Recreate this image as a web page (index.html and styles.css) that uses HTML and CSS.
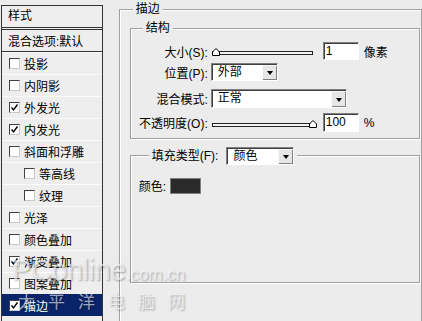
FILE: index.html
```html
<!DOCTYPE html>
<html lang="zh-CN">
<head>
  <meta charset="UTF-8" />
  <meta name="viewport" content="width=device-width, initial-scale=1.0"/>
  <title>图层样式 - 描边</title>
  <link rel="stylesheet" href="styles.css">
</head>
<body>
  <div class="dialog">
    <div class="styles-panel">
      <div class="panel-head">样式</div>
      <div class="panel-row blend">混合选项:默认</div>
      <div class="panel-row"><span class="check"></span>投影</div>
      <div class="panel-row"><span class="check"></span>内阴影</div>
      <div class="panel-row"><span class="check on"><svg viewBox="0 0 9 9"><path d="M1.5 4.5 L3.5 6.8 L7.5 1.5"/></svg></span>外发光</div>
      <div class="panel-row"><span class="check on"><svg viewBox="0 0 9 9"><path d="M1.5 4.5 L3.5 6.8 L7.5 1.5"/></svg></span>内发光</div>
      <div class="panel-row"><span class="check"></span>斜面和浮雕</div>
      <div class="panel-row sub"><span class="check"></span>等高线</div>
      <div class="panel-row sub"><span class="check"></span>纹理</div>
      <div class="panel-row"><span class="check"></span>光泽</div>
      <div class="panel-row"><span class="check"></span>颜色叠加</div>
      <div class="panel-row"><span class="check on"><svg viewBox="0 0 9 9"><path d="M1.5 4.5 L3.5 6.8 L7.5 1.5"/></svg></span>渐变叠加</div>
      <div class="panel-row"><span class="check"></span>图案叠加</div>
      <div class="panel-row selected"><span class="check on"><svg viewBox="0 0 9 9"><path d="M1.5 4.5 L3.5 6.8 L7.5 1.5"/></svg></span>描边</div>
    </div>

    <div class="group outer">
      <div class="group-title">描边</div>

      <div class="group structure">
        <div class="group-title">结构</div>
        <div class="row">
          <span class="label">大小(S):</span>
          <div class="slider"><div class="track"></div><svg class="thumb" viewBox="0 0 8 8"><polygon points="0.5,7.5 0.5,4 4,0.5 7.5,4 7.5,7.5"/></svg></div>
          <div class="field">1</div>
          <span class="unit">像素</span>
        </div>
        <div class="row row-pos">
          <span class="label">位置(P):</span>
          <div class="dropdown pos">外部<span class="arrow"></span></div>
        </div>
        <div class="row row-mode">
          <span class="label">混合模式:</span>
          <div class="dropdown mode">正常<span class="arrow"></span></div>
        </div>
        <div class="row row-opacity">
          <span class="label">不透明度(O):</span>
          <div class="slider"><div class="track"></div><svg class="thumb end" viewBox="0 0 8 8"><polygon points="0.5,7.5 0.5,4 4,0.5 7.5,4 7.5,7.5"/></svg></div>
          <div class="field tall">100</div>
          <span class="unit">%</span>
        </div>
      </div>

      <div class="group fill">
        <div class="group-title fill-title">
          <span>填充类型(F):</span>
          <div class="dropdown kind">颜色<span class="arrow"></span></div>
        </div>
        <div class="color-row">
          <span>颜色:</span>
          <span class="swatch"></span>
        </div>
      </div>
    </div>
  </div>

  <div class="watermark">
    <div class="wm-logo">PConline<span>.com.cn</span></div>
    <div class="wm-cn">太平洋电脑网</div>
  </div>
</body>
</html>
```

FILE: styles.css
```css
body {
  margin: 0;
  width: 422px;
  height: 321px;
  overflow: hidden;
  position: relative;
  background: #ececec;
  font-family: "Liberation Sans", "Noto Sans CJK SC", sans-serif;
  font-size: 12px;
  color: #000;
}
.dialog {
  display: flex;
  align-items: flex-start;
}

/* left list */
.styles-panel {
  width: 100px;
  height: 320px;
  margin: 5px 0 0 1px;
  border: 1px solid #333;
  border-bottom: none;
  background: #eeeeee;
}
.panel-head {
  height: 21px;
  line-height: 21px;
  padding-left: 6px;
  border-bottom: 3px double #333;
}
.panel-row {
  display: flex;
  align-items: center;
  height: 21px;
  padding-left: 7px;
  border-top: 1px solid #fbfbfb;
}
.panel-row.blend {
  border-top: none;
  padding-left: 6px;
  border-bottom: 1px solid #333;
}
.panel-row.sub {
  padding-left: 22px;
}
.panel-row.selected {
  background: #0a246a;
  color: #fff;
  border-top-color: #0a246a;
}
.check {
  width: 9px;
  height: 9px;
  margin-right: 4px;
  background: #fff;
  border: 1px solid;
  border-color: #404040 #c8c8c8 #c8c8c8 #404040;
  display: flex;
}
.check svg {
  width: 9px;
  height: 9px;
}
.check path {
  fill: none;
  stroke: #000;
  stroke-width: 1.4;
}

/* group boxes */
.group {
  position: relative;
  border: 1px solid #a0a0a0;
  box-shadow: inset 1px 1px 0 #fff, 1px 1px 0 #fff;
}
.group-title {
  position: absolute;
  top: -8px;
  left: 12px;
  padding: 0 3px;
  line-height: 15px;
  background: #ececec;
}
.outer {
  width: 291px;
  height: 293px;
  margin: 9px 0 0 16px;
  padding: 18px 1px 0 10px;
}
.outer > .group-title {
  left: 13px;
}
.structure {
  height: 96px;
  padding-top: 13px;
}
.row {
  display: flex;
  align-items: center;
  height: 18px;
}
.row-pos { margin-top: 3px; }
.row-mode { margin-top: 8px; height: 19px; }
.row-opacity { margin-top: 5px; height: 19px; }
.label {
  width: 77px;
  margin-right: 3px;
  text-align: right;
}
.slider {
  position: relative;
  width: 105px;
  height: 10px;
  margin-left: 1px;
  margin-right: 6px;
}
.track {
  position: absolute;
  left: 0;
  right: 4px;
  bottom: 1px;
  height: 2px;
  background: #f4f4f4;
  border: 1px solid #222;
}
.thumb {
  position: absolute;
  left: 0;
  bottom: 0;
  width: 8px;
  height: 8px;
}
.thumb.end {
  left: auto;
  right: 0;
}
.thumb polygon {
  fill: #fff;
  stroke: #000;
  stroke-width: 1;
}
.field {
  width: 32px;
  height: 16px;
  line-height: 16px;
  padding-left: 2px;
  background: #fff;
  border: 1px solid;
  border-color: #808080 #fff #fff #808080;
  box-shadow: inset 1px 1px 0 #404040;
}
.field.tall {
  height: 17px;
  line-height: 17px;
}
.unit {
  margin-left: 5px;
}
.dropdown {
  position: relative;
  height: 16px;
  line-height: 16px;
  padding-left: 6px;
  background: #fff;
  border: 1px solid;
  border-color: #808080 #fff #fff #808080;
  box-shadow: inset 1px 1px 0 #404040;
}
.dropdown.pos { width: 59px; }
.dropdown.mode { width: 128px; height: 17px; line-height: 17px; }
.dropdown.kind { width: 60px; }
.arrow {
  position: absolute;
  top: 1px;
  right: 0;
  bottom: 0;
  width: 14px;
  background: #e6e6e6;
  border-left: 1px solid #f8f8f8;
  border-top: 1px solid #f8f8f8;
  box-shadow: inset -1px -1px 0 #808080;
}
.arrow::after {
  content: "";
  position: absolute;
  left: 4px;
  top: 50%;
  margin-top: -2px;
  border-left: 3.5px solid transparent;
  border-right: 3.5px solid transparent;
  border-top: 4px solid #000;
}
.fill {
  height: 105px;
  margin-top: 16px;
  padding: 21px 0 0 8px;
}
.fill-title {
  display: flex;
  align-items: center;
  gap: 8px;
  top: -9px;
  left: 18px;
  background: #ececec;
}
.color-row {
  display: flex;
  align-items: center;
  gap: 4px;
}
.swatch {
  width: 29px;
  height: 14px;
  background: #2a2a2a;
  border: 1px solid #808080;
}

/* faded site watermark over the screenshot */
.watermark {
  position: absolute;
  left: 12px;
  top: 254px;
  color: rgba(255, 255, 255, 0.6);
  text-shadow: 1px 1px 2px rgba(0, 0, 0, 0.3);
  pointer-events: none;
}
.wm-logo {
  font-size: 29px;
  line-height: 32px;
  letter-spacing: -0.5px;
}
.wm-logo span {
  font-size: 17px;
  letter-spacing: 0;
}
.wm-cn {
  font-family: "Noto Sans CJK SC", sans-serif;
  font-size: 17px;
  line-height: 20px;
  letter-spacing: 13px;
  padding-left: 6px;
}
```
